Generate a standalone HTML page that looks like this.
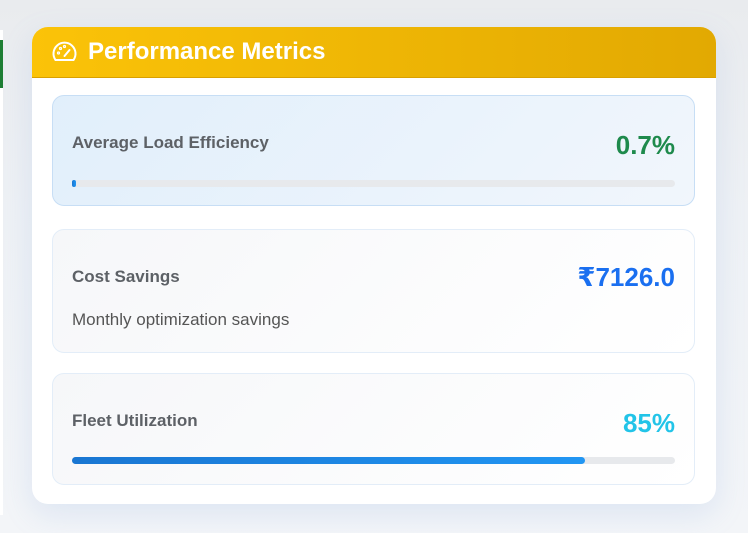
<!DOCTYPE html>
<html><head><meta charset="utf-8"><style>
*{box-sizing:border-box;margin:0;padding:0}
body{width:748px;height:533px;overflow:hidden;background:linear-gradient(180deg,#e9ebee 0%,#eef1f5 40%,#f3f5f8 100%);font-family:"Liberation Sans","DejaVu Sans",sans-serif;position:relative}
.left{position:absolute;left:0;top:30px;width:3px;height:485px;background:#fff;}
.left:before{content:"";position:absolute;left:0;top:10px;width:3px;height:48px;background:#1e7e34}
.card{position:absolute;left:32px;top:27px;width:684px;height:477px;background:#fff;border-radius:16px;overflow:hidden;box-shadow:0 10px 30px rgba(120,160,220,.18)}
.hdr{height:51px;background:linear-gradient(90deg,#fbc308,#e2a902);color:#fff;display:flex;align-items:center;padding-left:19px;font-weight:bold;font-size:24px;border-bottom:1px solid #d9a000}
.hdr svg{margin-right:10px}
.m{position:absolute;left:20px;width:643px;border-radius:12px;border:1px solid #e3edf8;background:linear-gradient(135deg,#f6f7f9,#fff)}
.m1{top:68px;height:111px;background:linear-gradient(135deg,#e1effb,#f1f6fc);border-color:#c7def5}
.m2{top:202px;height:124px}
.m3{top:346px;height:112px}
.lbl{position:absolute;left:19px;font-size:17px;font-weight:bold;color:#5d6166}
.val{position:absolute;right:19px;font-size:26px;font-weight:bold}
.bar{position:absolute;left:19px;right:19px;height:7px;border-radius:4px;background:#e7e9ec}
.fill{height:7px;border-radius:4px;background:linear-gradient(90deg,#1976d2,#2196f3)}
</style></head><body>
<div class="left"></div>
<div class="card">
<div class="hdr"><svg width="27" height="22" viewBox="0 0 26 22" fill="none" stroke="#fff" stroke-width="2" stroke-linecap="round"><path d="M4 19 A11 11 0 1 1 22 19 Z"/><path d="M13 15 L18 9"/><circle cx="7" cy="12" r=".6"/><circle cx="9" cy="7.5" r=".6"/><circle cx="13" cy="5.5" r=".6"/></svg>Performance Metrics</div>
<div class="m m1"><div class="lbl" style="top:37px">Average Load Efficiency</div><div class="val" style="top:34px;color:#1e8a4c">0.7%</div><div class="bar" style="top:84px"><div class="fill" style="width:4px"></div></div></div>
<div class="m m2"><div class="lbl" style="top:37px">Cost Savings</div><div class="val" style="top:32px;color:#1a6ff0">₹7126.0</div><div style="position:absolute;left:19px;top:80px;font-size:17px;color:#555">Monthly optimization savings</div></div>
<div class="m m3"><div class="lbl" style="top:37px">Fleet Utilization</div><div class="val" style="top:34px;color:#22c4e8">85%</div><div class="bar" style="top:83px"><div class="fill" style="width:85%"></div></div></div>
</div>
</body></html>
